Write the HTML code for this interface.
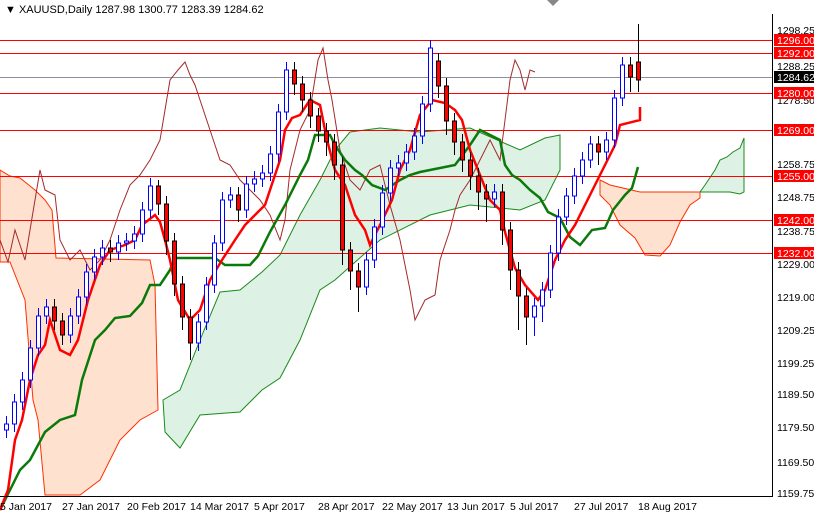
<!DOCTYPE html>
<html><head><meta charset="utf-8"><style>
html,body{margin:0;padding:0;background:#fff;width:814px;height:514px;overflow:hidden}
svg{display:block;font-family:"Liberation Sans",sans-serif}
</style></head><body>
<svg width="814" height="514" xmlns="http://www.w3.org/2000/svg">
<rect width="814" height="514" fill="#fff"/>
<polygon fill="#ff6a10" fill-opacity="0.2" stroke="#ff3000" stroke-width="1" points="0,170 10,176 20,178 35,190 45,200 52,210 56,258 150,260 155,285 158,410 140,420 120,440 100,480 80,495 45,495 38,420 33,400 25,300 10,262 0,262"/>
<polygon fill="#22a050" fill-opacity="0.15" stroke="#1a8a1a" stroke-width="1" points="163,400 180,390 200,340 220,292 240,290 262,272 280,255 300,215 320,180 335,150 350,132 380,128 420,132 470,128 520,150 545,138 560,135 560,170 545,200 520,210 470,205 430,215 380,240 335,280 320,290 300,340 280,378 262,390 240,412 200,415 180,448 165,432"/>
<polygon fill="#ff6a10" fill-opacity="0.2" stroke="#ff3000" stroke-width="1" points="600,180 610,185 640,192 700,192 700,198 690,205 680,222 670,245 660,256 645,255 635,238 620,225 610,205 600,195"/>
<polygon fill="#22a050" fill-opacity="0.15" stroke="#1a8a1a" stroke-width="1" points="700,192 705,185 715,170 720,160 727,157 733,152 740,148 744,138 744,192 740,194 730,192 715,192"/>
<g stroke="#ff0000" stroke-width="1">
<line x1="0" y1="40.5" x2="772" y2="40.5"/><line x1="0" y1="53.5" x2="772" y2="53.5"/>
<line x1="0" y1="93.5" x2="772" y2="93.5"/><line x1="0" y1="130.5" x2="772" y2="130.5"/>
<line x1="0" y1="176.5" x2="772" y2="176.5"/><line x1="0" y1="220.5" x2="772" y2="220.5"/>
<line x1="0" y1="253.5" x2="772" y2="253.5"/>
</g>
<line x1="0" y1="77.5" x2="772" y2="77.5" stroke="#8a8f99"/>
<polyline fill="none" stroke="#a52a2a" stroke-width="1" points="0,240 8,262 15,230 25,260 35,200 40,170 45,190 55,195 60,240 70,260 80,250 90,270 100,260 110,240 120,210 130,185 140,175 150,160 160,140 170,80 178,70 185,62 190,75 195,85 200,100 210,130 220,160 230,165 240,180 250,190 260,200 270,215 280,240 285,220 290,170 300,130 310,110 318,60 323,48 328,80 332,100 340,150 350,180 360,190 370,170 380,165 390,205 400,240 410,290 415,320 425,300 435,295 440,260 450,230 455,210 460,195 470,180 480,160 490,140 495,150 500,160 505,120 510,80 515,60 520,70 525,90 530,70 535,72"/>
<polyline fill="none" stroke="#0a7a0a" stroke-width="2.5" points="0,510 10,490 20,470 30,460 45,432 60,420 75,415 82,380 95,340 105,330 115,318 130,316 142,303 150,285 160,285 170,270 175,258 215,258 225,265 250,265 258,256 270,232 285,205 300,175 308,160 315,135 330,135 335,145 345,160 355,170 362,175 372,185 385,190 400,180 410,175 420,172 440,168 455,165 470,145 480,130 500,140 505,165 512,175 520,180 530,190 540,198 548,212 560,218 570,237 580,245 592,230 605,228 613,210 625,195 632,188 638,167"/>
<polyline fill="none" stroke="#ff0000" stroke-width="2.5" points="0,510 8,490 15,440 22,420 30,380 38,355 45,345 50,320 60,350 70,355 78,340 88,300 100,265 110,250 125,245 135,240 142,225 155,215 160,222 165,240 170,260 178,300 190,320 200,310 210,280 222,260 235,240 245,225 255,215 265,205 280,160 285,130 292,118 300,115 310,100 320,105 327,140 335,170 345,185 355,215 365,230 370,245 380,225 392,200 400,170 410,150 420,115 432,100 445,103 455,110 462,120 470,150 480,175 490,200 500,210 505,232 515,268 525,285 538,300 545,290 555,260 565,240 575,225 585,205 595,185 605,165 615,145 620,125 640,120 640,107"/>
<g stroke="#0000ff" fill="#fff" stroke-width="1">
<path d="M6.5 416V438M14.5 394V432M22.5 372V410M30.5 340V388M38.5 308V356M46.5 299V324M70.5 308V343M78.5 289V324M86.5 264V305M94.5 249V280M102.5 240V265M118.5 235V260M126.5 233V251M134.5 226V249M142.5 202V242M150.5 178V218M198.5 314V351M206.5 277V330M214.5 235V293M222.5 192V251M230.5 187V208M246.5 176V218M254.5 171V192M262.5 165V187M270.5 146V181M278.5 104V162M286.5 62V120M366.5 252V295M374.5 219V268M382.5 185V235M390.5 160V201M398.5 155V176M406.5 144V171M414.5 128V160M422.5 96V144M430.5 40V112M494.5 184V207M534.5 298V336M542.5 282V322M550.5 245V298M558.5 209V261M566.5 188V225M574.5 168V204M582.5 152V184M590.5 136V168M606.5 132V160M614.5 90V148M622.5 57V106"/>
<rect x="4.5" y="424" width="4" height="6"/><rect x="12.5" y="402" width="4" height="22"/><rect x="20.5" y="380" width="4" height="22"/><rect x="28.5" y="348" width="4" height="32"/><rect x="36.5" y="316" width="4" height="32"/><rect x="44.5" y="307" width="4" height="9"/><rect x="68.5" y="316" width="4" height="19"/><rect x="76.5" y="297" width="4" height="19"/><rect x="84.5" y="272" width="4" height="25"/><rect x="92.5" y="257" width="4" height="15"/><rect x="100.5" y="248" width="4" height="9"/><rect x="116.5" y="243" width="4" height="9"/><rect x="124.5" y="241" width="4" height="2"/><rect x="132.5" y="234" width="4" height="7"/><rect x="140.5" y="210" width="4" height="24"/><rect x="148.5" y="186" width="4" height="24"/><rect x="196.5" y="322" width="4" height="21"/><rect x="204.5" y="285" width="4" height="37"/><rect x="212.5" y="243" width="4" height="42"/><rect x="220.5" y="200" width="4" height="43"/><rect x="228.5" y="195" width="4" height="5"/><rect x="244.5" y="184" width="4" height="26"/><rect x="252.5" y="179" width="4" height="5"/><rect x="260.5" y="173" width="4" height="6"/><rect x="268.5" y="154" width="4" height="19"/><rect x="276.5" y="112" width="4" height="42"/><rect x="284.5" y="70" width="4" height="42"/><rect x="364.5" y="260" width="4" height="27"/><rect x="372.5" y="227" width="4" height="33"/><rect x="380.5" y="193" width="4" height="34"/><rect x="388.5" y="168" width="4" height="25"/><rect x="396.5" y="163" width="4" height="5"/><rect x="404.5" y="152" width="4" height="11"/><rect x="412.5" y="136" width="4" height="16"/><rect x="420.5" y="104" width="4" height="32"/><rect x="428.5" y="48" width="4" height="56"/><rect x="492.5" y="192" width="4" height="7"/><rect x="532.5" y="306" width="4" height="11"/><rect x="540.5" y="290" width="4" height="16"/><rect x="548.5" y="253" width="4" height="37"/><rect x="556.5" y="217" width="4" height="36"/><rect x="564.5" y="196" width="4" height="21"/><rect x="572.5" y="176" width="4" height="20"/><rect x="580.5" y="160" width="4" height="16"/><rect x="588.5" y="144" width="4" height="16"/><rect x="604.5" y="140" width="4" height="12"/><rect x="612.5" y="98" width="4" height="42"/><rect x="620.5" y="65" width="4" height="33"/>
</g>
<g stroke="#000" fill="#ff0000" stroke-width="1">
<path d="M54.5 299V330M62.5 313V345M110.5 240V262M158.5 180V215M166.5 196V255M174.5 233V296M182.5 276V330M190.5 309V360M238.5 187V222M294.5 62V95M302.5 76V112M310.5 92V128M318.5 108V142M326.5 123V156M334.5 134V180M342.5 157V265M350.5 242V290M358.5 263V312M438.5 53V98M446.5 78V135M454.5 113V155M462.5 134V172M470.5 152V190M478.5 168V210M486.5 184V222M502.5 184V245M510.5 222V290M518.5 262V330M526.5 288V345M598.5 136V165M630.5 57V92M638.5 24V92"/>
<rect x="52.5" y="307" width="4" height="14"/><rect x="60.5" y="321" width="4" height="14"/><rect x="108.5" y="248" width="4" height="4"/><rect x="156.5" y="186" width="4" height="18"/><rect x="164.5" y="204" width="4" height="37"/><rect x="172.5" y="241" width="4" height="43"/><rect x="180.5" y="284" width="4" height="33"/><rect x="188.5" y="317" width="4" height="26"/><rect x="236.5" y="195" width="4" height="15"/><rect x="292.5" y="70" width="4" height="14"/><rect x="300.5" y="84" width="4" height="16"/><rect x="308.5" y="100" width="4" height="16"/><rect x="316.5" y="116" width="4" height="15"/><rect x="324.5" y="131" width="4" height="11"/><rect x="332.5" y="142" width="4" height="23"/><rect x="340.5" y="165" width="4" height="85"/><rect x="348.5" y="250" width="4" height="21"/><rect x="356.5" y="271" width="4" height="16"/><rect x="436.5" y="61" width="4" height="25"/><rect x="444.5" y="86" width="4" height="35"/><rect x="452.5" y="121" width="4" height="21"/><rect x="460.5" y="142" width="4" height="18"/><rect x="468.5" y="160" width="4" height="16"/><rect x="476.5" y="176" width="4" height="16"/><rect x="484.5" y="192" width="4" height="7"/><rect x="500.5" y="192" width="4" height="38"/><rect x="508.5" y="230" width="4" height="40"/><rect x="516.5" y="270" width="4" height="26"/><rect x="524.5" y="296" width="4" height="21"/><rect x="596.5" y="144" width="4" height="8"/><rect x="628.5" y="65" width="4" height="12"/><rect x="636.5" y="62" width="4" height="18"/>
</g>
<line x1="772.5" y1="14" x2="772.5" y2="497" stroke="#000"/>
<line x1="0" y1="496.5" x2="773" y2="496.5" stroke="#000"/>
<polygon points="547,0 559,0 553,6" fill="#888"/>
<g font-size="11" fill="#000">
<text x="5" y="13">▼ XAUUSD,Daily  1287.98 1300.77 1283.39 1284.62</text>
</g>
<g font-size="10.5" fill="#000">
<text x="777" y="34">1298.25</text><text x="777" y="70">1288.25</text><text x="777" y="104">1278.50</text>
<text x="777" y="168">1258.75</text><text x="777" y="201">1248.75</text><text x="777" y="235">1238.75</text>
<text x="777" y="268">1229.00</text><text x="777" y="301">1219.00</text><text x="777" y="334">1209.25</text>
<text x="777" y="367">1199.25</text><text x="777" y="398">1189.50</text><text x="777" y="431">1179.50</text>
<text x="777" y="466">1169.50</text><text x="777" y="497">1159.75</text>
</g>
<g font-size="10.5">
<rect x="774" y="34" width="40" height="12" fill="#f00"/><text x="777" y="44" fill="#fff">1296.00</text>
<rect x="774" y="47" width="40" height="12" fill="#f00"/><text x="777" y="57" fill="#fff">1292.00</text>
<rect x="774" y="71" width="40" height="12" fill="#000"/><text x="777" y="81" fill="#fff">1284.62</text>
<rect x="774" y="87" width="40" height="12" fill="#f00"/><text x="777" y="97" fill="#fff">1280.00</text>
<rect x="774" y="124" width="40" height="12" fill="#f00"/><text x="777" y="134" fill="#fff">1269.00</text>
<rect x="774" y="170" width="40" height="12" fill="#f00"/><text x="777" y="180" fill="#fff">1255.00</text>
<rect x="774" y="214" width="40" height="12" fill="#f00"/><text x="777" y="224" fill="#fff">1242.00</text>
<rect x="774" y="247" width="40" height="12" fill="#f00"/><text x="777" y="257" fill="#fff">1232.00</text>
</g>
<g font-size="10.5" fill="#000">
<text x="0" y="510">5 Jan 2017</text><text x="62" y="510">27 Jan 2017</text><text x="127" y="510">20 Feb 2017</text>
<text x="190" y="510">14 Mar 2017</text><text x="254" y="510">5 Apr 2017</text><text x="318" y="510">28 Apr 2017</text>
<text x="382" y="510">22 May 2017</text><text x="447" y="510">13 Jun 2017</text><text x="510" y="510">5 Jul 2017</text>
<text x="574" y="510">27 Jul 2017</text><text x="638" y="510">18 Aug 2017</text>
</g>
</svg>
</body></html>
